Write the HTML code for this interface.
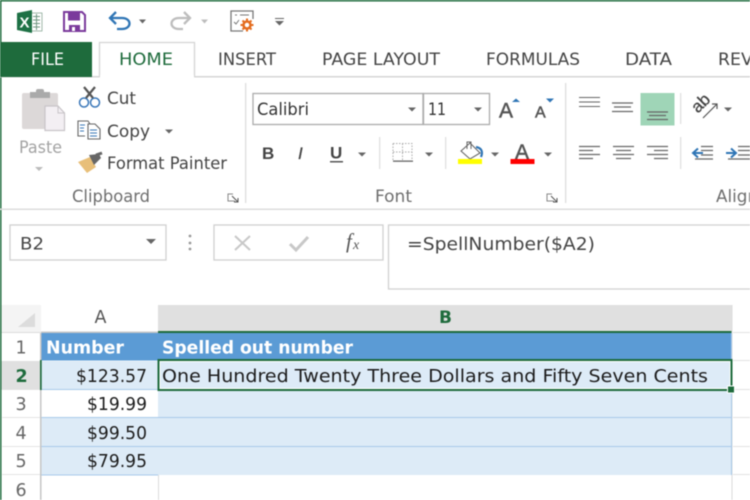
<!DOCTYPE html>
<html><head><meta charset="utf-8"><style>
html,body{margin:0;padding:0;background:#fff;width:750px;height:500px;overflow:hidden}
svg{display:block;filter:blur(.4px)}
text{font-family:"DejaVu Sans","Liberation Sans",sans-serif;fill:#444;font-size:16.5px}
.l{stroke:#666;stroke-width:1.300;fill:none}
.c{fill:#666}
.cell{font-size:17.5px;fill:#1c1c1c}
.h{font-size:17.5px;fill:#666}
.w{font-size:17.500px;font-weight:bold;fill:#fff}
.g{font-size:16.500px;fill:#6e6e6e}
</style></head><body>
<svg width="750" height="500" viewBox="0 0 750 500" xmlns="http://www.w3.org/2000/svg">
<rect x="0" y="0" width="750" height="1.500" fill="#1e6b3c"/>
<rect x="0" y="0" width="1.500" height="500" fill="#1e6b3c"/>
<!-- excel -->
<rect x="29" y="13" width="13" height="18" fill="#fff" stroke="#8aa896" stroke-width=".8"/>
<path d="M33 16.500h7M33 20h7M33 23.500h7M33 27h7M36.500 14v16" stroke="#6f9680" stroke-width="1"/>
<path d="M17 13 L32 10 V33 L17 30Z" fill="#1e7145"/>
<text x="19.500" y="27.500" style="font-size:15px;font-weight:bold;fill:#fff;font-family:'Liberation Sans'">X</text>
<!-- save -->
<path d="M64 12 H82 L85 15 V31 H64Z" fill="#fff" stroke="#7b3a9c" stroke-width="2"/>
<rect x="68" y="12" width="12" height="8.500" fill="#7b3a9c"/>
<rect x="69" y="25" width="11" height="6" fill="#7b3a9c"/>
<rect x="72" y="27" width="3" height="4" fill="#fff"/>
<!-- undo -->
<path d="M111 18 H122 C132 18 132 29 122 29 H117" fill="none" stroke="#2f75b5" stroke-width="2.300"/>
<path d="M116 12 L110 18 L116 24" fill="none" stroke="#2f75b5" stroke-width="2.300"/>
<path d="M139 19.500h7l-3.500 4z" class="c"/>
<!-- redo -->
<path d="M189 18 H179 C169 18 169 29 179 29 H183" fill="none" stroke="#bdbdbd" stroke-width="2.300"/>
<path d="M184 12 L190 18 L184 24" fill="none" stroke="#bdbdbd" stroke-width="2.300"/>
<path d="M201 19.500h7l-3.500 4z" fill="#bdbdbd"/>
<!-- customise -->
<path d="M243 31 H231 V11 H253 V19" fill="none" stroke="#777" stroke-width="1.300"/>
<path d="M235 15h2M240 15h9M234 22l2 2 3-4" fill="none" stroke="#777" stroke-width="1"/>
<path d="M247 18.500v13M240.500 25h13M242.500 20.500l9 9M251.500 20.500l-9 9" stroke="#e46c1e" stroke-width="2"/>
<circle cx="247" cy="25" r="3.500" fill="#fff" stroke="#e46c1e" stroke-width="2.500"/>
<path d="M275 18.500h9" stroke="#666" stroke-width="1"/>
<path d="M275 21h9l-4.500 4.500z" class="c"/>
<!-- tabs -->
<rect x="0" y="76" width="750" height="1.500" fill="#d6d6d6"/>
<rect x="0" y="42" width="92" height="35" fill="#1e6b3c"/>
<path d="M99.500 77 V42.500 H194.500 V77" fill="#fff" stroke="#d4d4d4" stroke-width="1.300"/>
<rect x="100" y="75" width="94" height="3" fill="#fff"/>
<text x="31" y="65" textLength="33" lengthAdjust="spacingAndGlyphs" style="fill:#fff">FILE</text>
<text x="119" y="65" textLength="54" lengthAdjust="spacingAndGlyphs" style="fill:#1e6b3c">HOME</text>
<text x="218" y="65" textLength="58" lengthAdjust="spacingAndGlyphs">INSERT</text>
<text x="322" y="65" textLength="118" lengthAdjust="spacingAndGlyphs">PAGE LAYOUT</text>
<text x="486" y="65" textLength="94" lengthAdjust="spacingAndGlyphs">FORMULAS</text>
<text x="625" y="65" textLength="47" lengthAdjust="spacingAndGlyphs">DATA</text>
<text x="718" y="65" textLength="68" lengthAdjust="spacingAndGlyphs">REVIEW</text>
<!-- ribbon -->
<rect x="0" y="208.500" width="750" height="1.500" fill="#dcdcdc"/>
<rect x="245" y="83" width="1.300" height="120" fill="#dedede"/>
<rect x="565" y="83" width="1.300" height="120" fill="#dedede"/>
<!-- Paste -->
<rect x="22" y="93" width="36" height="36" rx="2" fill="#dcd8d8"/>
<rect x="30" y="92" width="20" height="6" fill="#aaa"/>
<rect x="36" y="89" width="8" height="5" rx="2" fill="#aaa"/>
<path d="M45 106 H58 L64.500 113 V130.500 H45Z" fill="#f3eff3" stroke="#c8c4c8" stroke-width="1.200"/>
<path d="M58 106 V113 H64.500" fill="none" stroke="#c8c4c8"/>
<text x="19" y="153" textLength="43" lengthAdjust="spacingAndGlyphs" style="fill:#a3a3a3">Paste</text>
<path d="M35 167h8l-4 4z" fill="#bbb"/>
<!-- Cut -->
<circle cx="84" cy="102.500" r="4.500" fill="none" stroke="#3a77b8" stroke-width="1.500"/>
<circle cx="95" cy="102.500" r="4.500" fill="none" stroke="#3a77b8" stroke-width="1.500"/>
<path d="M86 98 L95 87 M93 98 L84 87" stroke="#555" stroke-width="2.200"/>
<text x="107" y="104" textLength="29" lengthAdjust="spacingAndGlyphs">Cut</text>
<!-- Copy -->
<path d="M85 136 H78 V121 H88 L90 124" fill="#fff" stroke="#666" stroke-width="1.100"/>
<path d="M80 125h5M80 128h4M80 131h4" stroke="#3a77b8" stroke-width=".9"/>
<path d="M88 124 H95 L100 129 V139 H88Z" fill="#fff" stroke="#666" stroke-width="1.100"/>
<path d="M90 130h7M90 133h7M90 136h7" stroke="#3a77b8" stroke-width=".9"/>
<text x="107" y="137" textLength="43" lengthAdjust="spacingAndGlyphs">Copy</text>
<path d="M165 129.500h8l-4 4z" class="c"/>
<!-- Format painter -->
<path d="M78 162 L90 157 L96 167 L87 173Z" fill="#e8bf79"/>
<path d="M89 155 L99 154 L101 158 L94 165Z" fill="#666"/>
<path d="M96 155 L102 153" stroke="#666" stroke-width="3"/>
<text x="107" y="169" textLength="120" lengthAdjust="spacingAndGlyphs">Format Painter</text>
<text x="72" y="202" textLength="78" lengthAdjust="spacingAndGlyphs" class="g">Clipboard</text>
<path d="M235 201 H228 V194 H233" fill="none" stroke="#888" stroke-width="1"/>
<path d="M232 196 L238 202 M238 198 V202 H234" fill="none" stroke="#555" stroke-width="1"/>
<!-- Font combos -->
<rect x="253" y="93.500" width="170" height="31" fill="#fff" stroke="#ababab" stroke-width="1.300"/>
<rect x="423.500" y="93.500" width="66" height="31" fill="#fff" stroke="#ababab" stroke-width="1.300"/>
<text x="257" y="115" textLength="52" lengthAdjust="spacingAndGlyphs" style="fill:#333">Calibri</text>
<text x="428" y="115" textLength="18" lengthAdjust="spacingAndGlyphs" style="fill:#333">11</text>
<path d="M408 107.500h8l-4 4z" class="c"/>
<path d="M474 107.500h8l-4 4z" class="c"/>
<text x="499" y="117.500" style="font-size:21px;fill:#555;stroke:#555;stroke-width:.5;font-family:'Liberation Sans'">A</text>
<path d="M512 102l4-3.500 4 3.500z" fill="#2f75b5"/>
<text x="535" y="117.500" style="font-size:16px;fill:#555;stroke:#555;stroke-width:.5;font-family:'Liberation Sans'">A</text>
<path d="M546 98.500h8l-4 4z" fill="#2f75b5"/>
<!-- B I U -->
<text x="262" y="159" style="font-size:17px;font-weight:bold;fill:#444;font-family:'Liberation Sans'">B</text>
<text x="298" y="159" style="font-size:17px;font-style:italic;fill:#444;stroke:#444;stroke-width:.3;font-family:'Liberation Sans'">I</text>
<text x="330" y="158.500" style="font-size:17px;font-weight:bold;fill:#444;font-family:'Liberation Sans'">U</text>
<rect x="330" y="161" width="13" height="1.500" fill="#555"/>
<path d="M358 152.500h8l-4 4z" class="c"/>
<rect x="379" y="137" width="1.300" height="32" fill="#e0e0e0"/>
<path d="M393 143.500h19v17M393 143.500v17M402.500 143.500v17M393 152h19" fill="none" stroke="#aaa" stroke-width="1" stroke-dasharray="1.500 1.500"/>
<rect x="393" y="160.500" width="20" height="1.300" fill="#666"/>
<path d="M425 152.500h8l-4 4z" class="c"/>
<rect x="445" y="137" width="1.300" height="32" fill="#e0e0e0"/>
<path d="M461 151 L470 143 L480 153 L470 159Z" fill="#fff" stroke="#666" stroke-width="1.100"/>
<path d="M467 149 V142 H471 V149" fill="none" stroke="#666" stroke-width="1"/>
<path d="M476 147 C482 148 483 152 481 157" fill="none" stroke="#2f75b5" stroke-width="2.200"/>
<rect x="458" y="159" width="24" height="5" fill="#ffff00"/>
<path d="M491 152.500h8l-4 4z" class="c"/>
<text x="515" y="159" style="font-size:21px;fill:#555;stroke:#555;stroke-width:.5;font-family:'Liberation Sans'">A</text>
<rect x="510.500" y="159" width="24" height="5" fill="#ff0000"/>
<path d="M544 152.500h8l-4 4z" class="c"/>
<text x="375" y="202" textLength="37" lengthAdjust="spacingAndGlyphs" class="g">Font</text>
<path d="M554 201 H547 V194 H552" fill="none" stroke="#888" stroke-width="1"/>
<path d="M551 196 L557 202 M557 198 V202 H553" fill="none" stroke="#555" stroke-width="1"/>
<!-- Alignment -->
<path d="M579 97.500h21M579 102h21M579 106.500h21" class="l" style="stroke-width:1"/>
<path d="M612 103h21M614 107h17M612 111.500h21" class="l"/>
<rect x="640.500" y="93" width="34" height="32.500" fill="#9fd5b7"/>
<path d="M647 112h21M649 115.500h17M647 119.500h21" class="l"/>
<rect x="680" y="93" width="1.300" height="31" fill="#e0e0e0"/>
<text x="693" y="110" transform="rotate(-45 700 106)" style="font-size:17px;fill:#444;stroke:#444;stroke-width:.3;font-family:'Liberation Sans'">ab</text>
<path d="M703 118 L717 104 M712 104 h5 v5" fill="none" stroke="#555" stroke-width="1.200"/>
<path d="M724 107.500h8l-4 4z" class="c"/>
<path d="M579 146.500h21M579 150.500h14M579 154.500h21M579 158.500h14" class="l"/>
<path d="M613 146.500h21M616 150.500h15M613 154.500h21M616 158.500h15" class="l"/>
<path d="M647 146.500h21M654 150.500h14M647 154.500h21M654 158.500h14" class="l"/>
<rect x="680" y="137" width="1.300" height="32" fill="#e0e0e0"/>
<path d="M701 146.500h12M701 150.500h12M701 155h12M695 159h18" class="l"/>
<path d="M693 153 H703 M698 148.500 L693 153 L698 157.500" fill="none" stroke="#2f75b5" stroke-width="2"/>
<path d="M738 146.500h12M738 150.500h12M738 155h12M728 159h22" class="l"/>
<path d="M726 153 H736 M731 148.500 L736 153 L731 157.500" fill="none" stroke="#2f75b5" stroke-width="2"/>
<text x="716" y="202" class="g" textLength="86" lengthAdjust="spacingAndGlyphs">Alignment</text>
<!-- formula bar -->
<rect x="10" y="225" width="156" height="35" fill="#fff" stroke="#d0d0d0" stroke-width="1.300"/>
<text x="20" y="249.500" textLength="24" lengthAdjust="spacingAndGlyphs" style="fill:#444">B2</text>
<path d="M146 239h10l-5 5z" class="c"/>
<circle cx="190" cy="236" r="1.400" fill="#999"/><circle cx="190" cy="243" r="1.400" fill="#999"/><circle cx="190" cy="249" r="1.400" fill="#999"/>
<rect x="214" y="225" width="169" height="35" fill="#fff" stroke="#d0d0d0" stroke-width="1.300"/>
<path d="M235 236 L250 250 M250 236 L235 250" stroke="#c8c8c8" stroke-width="2"/>
<path d="M290 244 L296 250 L308 237" fill="none" stroke="#c8c8c8" stroke-width="3"/>
<text x="346" y="248" style="font-size:21px;font-style:italic;fill:#555;font-family:'Liberation Serif'">f</text>
<text x="353" y="249" style="font-size:14px;font-style:italic;fill:#555;font-family:'Liberation Serif'">x</text>
<path d="M751 225 H388.500 V289 H751" fill="#fff" stroke="#d0d0d0" stroke-width="1.300"/>
<text x="407" y="250" textLength="188" lengthAdjust="spacingAndGlyphs" style="fill:#444;font-size:17.500px">=SpellNumber($A2)</text>
<!-- sheet headers -->
<rect x="1.500" y="305" width="40" height="27" fill="#f4f4f4"/>
<path d="M35 327 V313 L18 327Z" fill="#dcdcdc"/>
<rect x="41" y="305" width="117" height="27" fill="#fff"/>
<rect x="158" y="305" width="574" height="27" fill="#e0e0e0"/>
<rect x="158" y="331" width="574" height="2" fill="#1e6b3c"/>
<rect x="1.500" y="332" width="39" height="1" fill="#dcdcdc"/>
<rect x="41" y="331.500" width="117" height="1.500" fill="#c6c6c6"/>
<rect x="40" y="333" width="1.500" height="167" fill="#c6c6c6"/>
<rect x="158" y="475" width="1" height="25" fill="#dcdcdc"/>
<rect x="731.500" y="305" width="1" height="195" fill="#dcdcdc"/>
<path d="M733 332.500H750M733 360.500H750M733 389.500H750M733 417.500H750M733 446.500H750M733 474.500H750" stroke="#e2e2e2" stroke-width="1"/>
<path d="M2 389.500H40M2 417.500H40M2 446.500H40M2 474.500H40" stroke="#e4e4e4" stroke-width="1"/>
<text x="94.500" y="323" style="font-size:17.500px;fill:#555">A</text>
<text x="439" y="323" style="font-size:17px;font-weight:bold;fill:#1e6b3c">B</text>
<!-- cells -->
<rect x="41.500" y="333" width="690" height="27.500" fill="#5b9bd5"/>
<rect x="1.500" y="361" width="38.500" height="28.500" fill="#e0e0e0"/>
<rect x="41.500" y="361" width="690" height="28.500" fill="#ddebf7"/>
<rect x="158" y="389" width="573.500" height="86" fill="#ddebf7"/>
<rect x="41.500" y="418" width="117" height="57" fill="#ddebf7"/>
<path d="M41.500 389.500H158M41.500 417.500H731M41.500 446.500H731M41.500 475H158" stroke="#a8c9ea" stroke-width="1"/>
<rect x="731" y="333" width="1" height="142" fill="#a8c9ea"/>
<!-- selected -->
<rect x="40" y="360" width="1.700" height="30" fill="#1e6b3c"/>
<rect x="158.500" y="360" width="573" height="30" fill="#ddebf7" stroke="#1e6b3c" stroke-width="2"/>
<rect x="160" y="361.500" width="570" height="27" fill="none" stroke="#fff" stroke-width="1"/>
<rect x="727.500" y="386" width="7" height="7" fill="#1e6b3c" stroke="#fff" stroke-width="1"/>
<text x="46" y="353.500" textLength="78" lengthAdjust="spacingAndGlyphs" class="w">Number</text>
<text x="162" y="353.500" textLength="191" lengthAdjust="spacingAndGlyphs" class="w">Spelled out number</text>
<text x="76" y="382" textLength="71" lengthAdjust="spacingAndGlyphs" class="cell">$123.57</text>
<text x="87" y="410" textLength="60" lengthAdjust="spacingAndGlyphs" class="cell">$19.99</text>
<text x="87" y="439" textLength="60" lengthAdjust="spacingAndGlyphs" class="cell">$99.50</text>
<text x="87" y="467" textLength="60" lengthAdjust="spacingAndGlyphs" class="cell">$79.95</text>
<text x="162" y="382" textLength="546" lengthAdjust="spacingAndGlyphs" class="cell">One Hundred Twenty Three Dollars and Fifty Seven Cents</text>
<text x="15.500" y="353.500" class="h">1</text>
<text x="15.500" y="382" style="font-size:17.500px;font-weight:bold;fill:#1e6b3c">2</text>
<text x="15.500" y="410" class="h">3</text>
<text x="15.500" y="439" class="h">4</text>
<text x="15.500" y="467" class="h">5</text>
<text x="15.500" y="496" class="h">6</text>
</svg>
</body></html>
